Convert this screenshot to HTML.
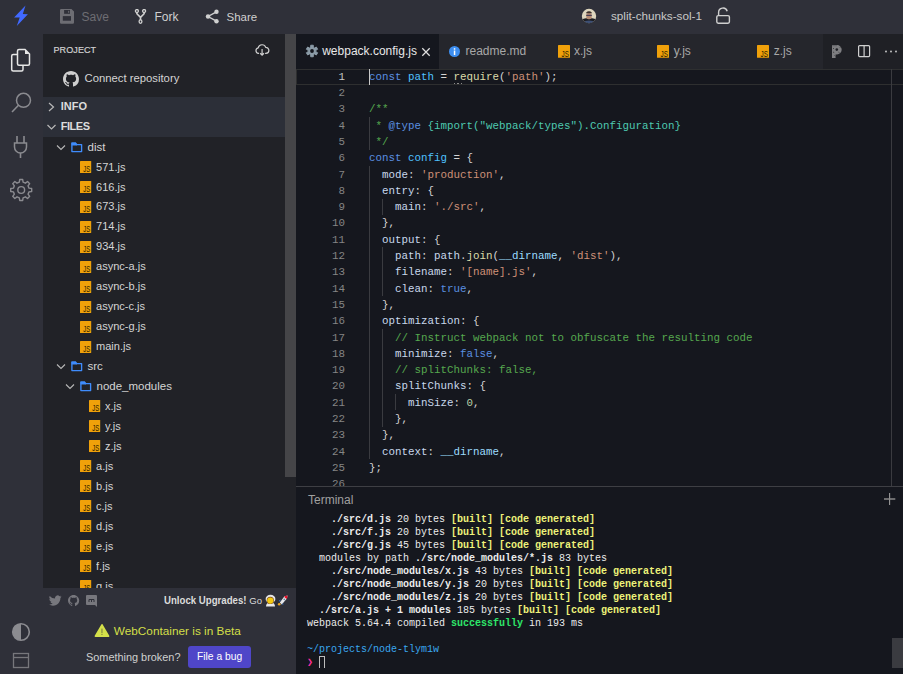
<!DOCTYPE html>
<html><head><meta charset="utf-8"><style>
html,body{margin:0;padding:0;width:903px;height:674px;overflow:hidden;background:#15171e;}
body{position:relative;font-family:'Liberation Sans', sans-serif;}
</style></head><body>
<div style="position:absolute;left:0px;top:0px;width:903px;height:34px;background:#2f3039;"></div><svg style="position:absolute;left:10px;top:2px;" width="24" height="28" viewBox="0 0 24 28"><polygon points="15.5,3.6 4.1,15.6 9.7,15.6 6.8,24 17.9,12.2 12.8,12.0" fill="#4169ff"/></svg><svg style="position:absolute;left:60px;top:9px;" width="14" height="15" viewBox="0 0 14 15"><path d="M1.5 0 H11.5 L14 2.5 V13.5 a1.2 1.2 0 0 1 -1.2 1.2 H1.2 a1.2 1.2 0 0 1 -1.2 -1.2 V1.2 a1.2 1.2 0 0 1 1.2 -1.2z" fill="#6d6d73"/><rect x="4.1" y="1" width="5.9" height="3.8" fill="#2f3039"/><rect x="8.2" y="1.8" width="1" height="2" fill="#6d6d73"/><rect x="2.8" y="7.1" width="8.2" height="4.6" fill="#2f3039"/></svg><div style="position:absolute;left:81.5px;top:16.74px;line-height:0;white-space:pre;font-family:'Liberation Sans', sans-serif;font-size:12px;font-weight:400;color:#6d6d73;letter-spacing:0px;">Save</div><svg style="position:absolute;left:134px;top:9px;" width="13" height="15" viewBox="0 0 13 15"><circle cx="2.9" cy="2" r="1.5" fill="none" stroke="#d0d0d0" stroke-width="1.3"/><circle cx="10.1" cy="2" r="1.5" fill="none" stroke="#d0d0d0" stroke-width="1.3"/><ellipse cx="6.5" cy="12.6" rx="1.4" ry="1.7" fill="none" stroke="#d0d0d0" stroke-width="1.3"/><path d="M2.9 3.5 V4.8 L6.5 8.4 L10.1 4.8 V3.5 M6.5 8.4 V10.9" fill="none" stroke="#d0d0d0" stroke-width="1.6" stroke-linejoin="round"/></svg><div style="position:absolute;left:154.4px;top:16.74px;line-height:0;white-space:pre;font-family:'Liberation Sans', sans-serif;font-size:12px;font-weight:400;color:#cfcfcf;letter-spacing:0px;">Fork</div><svg style="position:absolute;left:205px;top:9px;" width="15" height="15" viewBox="0 0 15 15"><circle cx="11.5" cy="2.8" r="2.2" fill="#cfcfcf"/><circle cx="3" cy="7.5" r="2.2" fill="#cfcfcf"/><circle cx="11.5" cy="12.2" r="2.2" fill="#cfcfcf"/><path d="M11.5 2.8 L3 7.5 L11.5 12.2" fill="none" stroke="#cfcfcf" stroke-width="1.4"/></svg><div style="position:absolute;left:226.5px;top:16.92px;line-height:0;white-space:pre;font-family:'Liberation Sans', sans-serif;font-size:11.5px;font-weight:400;color:#cfcfcf;letter-spacing:0px;">Share</div><svg style="position:absolute;left:581px;top:8px;" width="16" height="16" viewBox="0 0 16 16"><defs><clipPath id="av"><circle cx="8" cy="8" r="7.2"/></clipPath></defs><g clip-path="url(#av)"><rect width="16" height="16" fill="#ddd5bd"/><path d="M1 16 V12 Q2 10.5 5 10.3 H11 Q14 10.5 15 12 V16z" fill="#1c1d22"/><path d="M4 16 V13 Q8 11.8 12 13 V16z" fill="#3d4f75"/><rect x="5.3" y="5" width="5.4" height="6.2" rx="2" fill="#b48a72"/><path d="M5 6 Q5 3.2 8 3.3 Q11 3.2 11 6 V5.2 H5z" fill="#3a2f2a"/><rect x="5.2" y="6.8" width="5.6" height="1.1" fill="#3a3550"/></g></svg><div style="position:absolute;left:611px;top:15.75px;line-height:0;white-space:pre;font-family:'Liberation Sans', sans-serif;font-size:11.7px;font-weight:400;color:#c8c8c8;letter-spacing:0px;">split-chunks-sol-1</div><svg style="position:absolute;left:715px;top:7px;" width="16" height="18" viewBox="0 0 16 18"><rect x="1.8" y="8.6" width="12.6" height="7.6" rx="1.4" fill="none" stroke="#cfcfcf" stroke-width="1.4"/><path d="M3.6 8.6 V5.6 a4.4 4.4 0 0 1 8.6 -1.4" fill="none" stroke="#cfcfcf" stroke-width="1.4"/></svg><div style="position:absolute;left:0px;top:34px;width:43px;height:640px;background:#2f3039;"></div><svg style="position:absolute;left:10px;top:48px;" width="22" height="25" viewBox="0 0 22 25"><path d="M7.5 6.5 H3.2 a1.5 1.5 0 0 0 -1.5 1.5 V21.5 a1.5 1.5 0 0 0 1.5 1.5 H11.5 a1.5 1.5 0 0 0 1.5 -1.5 V18" fill="none" stroke="#e6e6e6" stroke-width="1.5"/><path d="M9 1.5 H15 L19.5 6 V15.8 a1.5 1.5 0 0 1 -1.5 1.5 H9 a1.5 1.5 0 0 1 -1.5 -1.5 V3 a1.5 1.5 0 0 1 1.5 -1.5z" fill="none" stroke="#e6e6e6" stroke-width="1.5"/><path d="M15 1.5 V6 H19.5z" fill="#e6e6e6"/></svg><svg style="position:absolute;left:10px;top:91px;" width="23" height="24" viewBox="0 0 23 24"><circle cx="13.5" cy="9.3" r="7" fill="none" stroke="#8b8b90" stroke-width="1.5"/><path d="M8.5 14.3 L2 21" stroke="#8b8b90" stroke-width="1.6"/></svg><svg style="position:absolute;left:12px;top:134px;" width="18" height="26" viewBox="0 0 18 26"><path d="M5 2 V9 M12 2 V9" stroke="#8b8b90" stroke-width="1.6"/><path d="M2.5 9 H14.5 V13 a6 6 0 0 1 -12 0z" fill="none" stroke="#8b8b90" stroke-width="1.5"/><path d="M8.5 19 V24" stroke="#8b8b90" stroke-width="1.6"/></svg><svg style="position:absolute;left:9px;top:178px;" width="25" height="25" viewBox="0 0 25 25"><path d="M10.33 4.22 L10.71 1.51 L13.69 1.51 L14.07 4.22 L16.38 5.18 L18.56 3.52 L20.68 5.64 L19.02 7.82 L19.98 10.13 L22.69 10.51 L22.69 13.49 L19.98 13.87 L19.02 16.18 L20.68 18.36 L18.56 20.48 L16.38 18.82 L14.07 19.78 L13.69 22.49 L10.71 22.49 L10.33 19.78 L8.02 18.82 L5.84 20.48 L3.72 18.36 L5.38 16.18 L4.42 13.87 L1.71 13.49 L1.71 10.51 L4.42 10.13 L5.38 7.82 L3.72 5.64 L5.84 3.52 L8.02 5.18Z" fill="none" stroke="#8b8b90" stroke-width="1.4" stroke-linejoin="round"/><circle cx="12.2" cy="12" r="3.4" fill="none" stroke="#8b8b90" stroke-width="1.4"/></svg><svg style="position:absolute;left:11px;top:622px;" width="20" height="20" viewBox="0 0 20 20"><circle cx="10" cy="10" r="8.3" fill="none" stroke="#8b8b90" stroke-width="1.6"/><path d="M10 1.7 a8.3 8.3 0 0 0 0 16.6z" fill="#8b8b90"/></svg><svg style="position:absolute;left:12px;top:652px;" width="18" height="17" viewBox="0 0 18 17"><rect x="1.5" y="1.5" width="15" height="14" fill="none" stroke="#77777c" stroke-width="1.3"/><path d="M1.5 5.5 H16.5" stroke="#77777c" stroke-width="1.3"/></svg><div style="position:absolute;left:43px;top:34px;width:242px;height:554px;background:#212227;"></div><div style="position:absolute;left:53.5px;top:50.08px;line-height:0;white-space:pre;font-family:'Liberation Sans', sans-serif;font-size:9px;font-weight:400;color:#d0d0d0;letter-spacing:0.1px;-webkit-text-stroke:0.2px #d0d0d0;">PROJECT</div><svg style="position:absolute;left:254px;top:42px;" width="16" height="15" viewBox="0 0 16 15"><g transform="translate(1.2,1.5) scale(0.86)"><path d="M4.5 11.5 H3.8 a3.3 3.3 0 0 1 -.3 -6.5 a4.6 4.6 0 0 1 8.8 -.5 a3.5 3.5 0 0 1 .2 7 H11.5" fill="none" stroke="#d0d0d0" stroke-width="1.4"/><path d="M8 6.5 V13.5 M5.8 11.3 L8 13.6 L10.2 11.3" fill="none" stroke="#d0d0d0" stroke-width="1.4"/></g></svg><svg style="position:absolute;left:63px;top:71px;" width="16" height="16" viewBox="0 0 16 16"><path fill="#cfcfcf" d="M8 0C3.58 0 0 3.58 0 8c0 3.54 2.29 6.53 5.47 7.59.4.07.55-.17.55-.38 0-.19-.01-.82-.01-1.49-2.01.37-2.53-.49-2.69-.94-.09-.23-.48-.94-.82-1.13-.28-.15-.68-.52-.01-.53.63-.01 1.08.58 1.23.82.72 1.21 1.87.87 2.33.66.07-.52.28-.87.51-1.07-1.78-.2-3.64-.89-3.64-3.95 0-.87.31-1.59.82-2.15-.08-.2-.36-1.02.08-2.12 0 0 .67-.21 2.2.82.64-.18 1.32-.27 2-.27.68 0 1.36.09 2 .27 1.53-1.04 2.2-.82 2.2-.82.44 1.1.16 1.92.08 2.12.51.56.82 1.27.82 2.15 0 3.07-1.87 3.75-3.65 3.95.29.25.54.73.54 1.48 0 1.07-.01 1.93-.01 2.2 0 .21.15.46.55.38A8.013 8.013 0 0016 8c0-4.42-3.58-8-8-8z"/></svg><div style="position:absolute;left:84.5px;top:78.48px;line-height:0;white-space:pre;font-family:'Liberation Sans', sans-serif;font-size:11.3px;font-weight:400;color:#d4d4d4;letter-spacing:0px;">Connect repository</div><div style="position:absolute;left:43px;top:97px;width:242px;height:40px;background:#2c2f38;"></div><svg style="position:absolute;left:46px;top:101px;" width="10" height="12" viewBox="0 0 10 12"><path d="M3 2 L7.5 6 L3 10" fill="none" stroke="#b8b8b8" stroke-width="1.2"/></svg><div style="position:absolute;left:60.8px;top:106.19px;line-height:0;white-space:pre;font-family:'Liberation Sans', sans-serif;font-size:11px;font-weight:700;color:#dcdcdc;letter-spacing:0px;">INFO</div><svg style="position:absolute;left:46px;top:121px;" width="10" height="12" viewBox="0 0 10 12"><path d="M1.5 4 L5.5 8 L9.5 4" fill="none" stroke="#b8b8b8" stroke-width="1.2"/></svg><div style="position:absolute;left:60.8px;top:125.79px;line-height:0;white-space:pre;font-family:'Liberation Sans', sans-serif;font-size:11px;font-weight:700;color:#dcdcdc;letter-spacing:-0.5px;">FILES</div><div style="position:absolute;left:43px;top:137px;width:242px;height:451px;overflow:hidden"><svg style="position:absolute;left:13px;top:6.5px;" width="10" height="8" viewBox="0 0 10 8"><path d="M1 1.5 L5 5.5 L9 1.5" fill="none" stroke="#b8b8b8" stroke-width="1.1"/></svg><svg style="position:absolute;left:27.6px;top:5.0px;" width="13" height="11" viewBox="0 0 13 11"><path d="M0.9 1.2 H4.6 L5.6 2.6 H10.6 V9.6 H0.9z" fill="none" stroke="#3f8cfc" stroke-width="1.35" stroke-linejoin="round"/><path d="M0.5 0.6 H4.8 L5.9 2.2 V3.6 H0.5z" fill="#3f8cfc"/></svg><div style="position:absolute;left:44.5px;top:10.02px;line-height:0;white-space:pre;font-family:'Liberation Sans', sans-serif;font-size:11.5px;font-weight:400;color:#d4d4d4;letter-spacing:0px;">dist</div><svg style="position:absolute;left:37px;top:24px;" width="13" height="13" viewBox="0 0 13 13"><rect x="0" y="0" width="11.2" height="12" rx="0.6" fill="#f0a10a"/><g transform="translate(10.1,11.1) scale(0.72,1)"><text x="0" y="0" text-anchor="end" font-family="Liberation Sans" font-size="8.2" fill="#2a1c00">JS</text></g></svg><div style="position:absolute;left:53.400000000000006px;top:29.57px;line-height:0;white-space:pre;font-family:'Liberation Sans', sans-serif;font-size:11.5px;font-weight:400;color:#d4d4d4;letter-spacing:0px;transform:scaleX(0.96);transform-origin:0 0;">571.js</div><svg style="position:absolute;left:37px;top:44px;" width="13" height="13" viewBox="0 0 13 13"><rect x="0" y="0" width="11.2" height="12" rx="0.6" fill="#f0a10a"/><g transform="translate(10.1,11.1) scale(0.72,1)"><text x="0" y="0" text-anchor="end" font-family="Liberation Sans" font-size="8.2" fill="#2a1c00">JS</text></g></svg><div style="position:absolute;left:53.400000000000006px;top:49.52px;line-height:0;white-space:pre;font-family:'Liberation Sans', sans-serif;font-size:11.5px;font-weight:400;color:#d4d4d4;letter-spacing:0px;transform:scaleX(0.96);transform-origin:0 0;">616.js</div><svg style="position:absolute;left:37px;top:64px;" width="13" height="13" viewBox="0 0 13 13"><rect x="0" y="0" width="11.2" height="12" rx="0.6" fill="#f0a10a"/><g transform="translate(10.1,11.1) scale(0.72,1)"><text x="0" y="0" text-anchor="end" font-family="Liberation Sans" font-size="8.2" fill="#2a1c00">JS</text></g></svg><div style="position:absolute;left:53.400000000000006px;top:69.47px;line-height:0;white-space:pre;font-family:'Liberation Sans', sans-serif;font-size:11.5px;font-weight:400;color:#d4d4d4;letter-spacing:0px;transform:scaleX(0.96);transform-origin:0 0;">673.js</div><svg style="position:absolute;left:37px;top:84px;" width="13" height="13" viewBox="0 0 13 13"><rect x="0" y="0" width="11.2" height="12" rx="0.6" fill="#f0a10a"/><g transform="translate(10.1,11.1) scale(0.72,1)"><text x="0" y="0" text-anchor="end" font-family="Liberation Sans" font-size="8.2" fill="#2a1c00">JS</text></g></svg><div style="position:absolute;left:53.400000000000006px;top:89.42px;line-height:0;white-space:pre;font-family:'Liberation Sans', sans-serif;font-size:11.5px;font-weight:400;color:#d4d4d4;letter-spacing:0px;transform:scaleX(0.96);transform-origin:0 0;">714.js</div><svg style="position:absolute;left:37px;top:104px;" width="13" height="13" viewBox="0 0 13 13"><rect x="0" y="0" width="11.2" height="12" rx="0.6" fill="#f0a10a"/><g transform="translate(10.1,11.1) scale(0.72,1)"><text x="0" y="0" text-anchor="end" font-family="Liberation Sans" font-size="8.2" fill="#2a1c00">JS</text></g></svg><div style="position:absolute;left:53.400000000000006px;top:109.37px;line-height:0;white-space:pre;font-family:'Liberation Sans', sans-serif;font-size:11.5px;font-weight:400;color:#d4d4d4;letter-spacing:0px;transform:scaleX(0.96);transform-origin:0 0;">934.js</div><svg style="position:absolute;left:37px;top:124px;" width="13" height="13" viewBox="0 0 13 13"><rect x="0" y="0" width="11.2" height="12" rx="0.6" fill="#f0a10a"/><g transform="translate(10.1,11.1) scale(0.72,1)"><text x="0" y="0" text-anchor="end" font-family="Liberation Sans" font-size="8.2" fill="#2a1c00">JS</text></g></svg><div style="position:absolute;left:53.400000000000006px;top:129.32px;line-height:0;white-space:pre;font-family:'Liberation Sans', sans-serif;font-size:11.5px;font-weight:400;color:#d4d4d4;letter-spacing:0px;transform:scaleX(0.96);transform-origin:0 0;">async-a.js</div><svg style="position:absolute;left:37px;top:144px;" width="13" height="13" viewBox="0 0 13 13"><rect x="0" y="0" width="11.2" height="12" rx="0.6" fill="#f0a10a"/><g transform="translate(10.1,11.1) scale(0.72,1)"><text x="0" y="0" text-anchor="end" font-family="Liberation Sans" font-size="8.2" fill="#2a1c00">JS</text></g></svg><div style="position:absolute;left:53.400000000000006px;top:149.27px;line-height:0;white-space:pre;font-family:'Liberation Sans', sans-serif;font-size:11.5px;font-weight:400;color:#d4d4d4;letter-spacing:0px;transform:scaleX(0.96);transform-origin:0 0;">async-b.js</div><svg style="position:absolute;left:37px;top:164px;" width="13" height="13" viewBox="0 0 13 13"><rect x="0" y="0" width="11.2" height="12" rx="0.6" fill="#f0a10a"/><g transform="translate(10.1,11.1) scale(0.72,1)"><text x="0" y="0" text-anchor="end" font-family="Liberation Sans" font-size="8.2" fill="#2a1c00">JS</text></g></svg><div style="position:absolute;left:53.400000000000006px;top:169.22px;line-height:0;white-space:pre;font-family:'Liberation Sans', sans-serif;font-size:11.5px;font-weight:400;color:#d4d4d4;letter-spacing:0px;transform:scaleX(0.96);transform-origin:0 0;">async-c.js</div><svg style="position:absolute;left:37px;top:184px;" width="13" height="13" viewBox="0 0 13 13"><rect x="0" y="0" width="11.2" height="12" rx="0.6" fill="#f0a10a"/><g transform="translate(10.1,11.1) scale(0.72,1)"><text x="0" y="0" text-anchor="end" font-family="Liberation Sans" font-size="8.2" fill="#2a1c00">JS</text></g></svg><div style="position:absolute;left:53.400000000000006px;top:189.17px;line-height:0;white-space:pre;font-family:'Liberation Sans', sans-serif;font-size:11.5px;font-weight:400;color:#d4d4d4;letter-spacing:0px;transform:scaleX(0.96);transform-origin:0 0;">async-g.js</div><svg style="position:absolute;left:37px;top:204px;" width="13" height="13" viewBox="0 0 13 13"><rect x="0" y="0" width="11.2" height="12" rx="0.6" fill="#f0a10a"/><g transform="translate(10.1,11.1) scale(0.72,1)"><text x="0" y="0" text-anchor="end" font-family="Liberation Sans" font-size="8.2" fill="#2a1c00">JS</text></g></svg><div style="position:absolute;left:53.400000000000006px;top:209.12px;line-height:0;white-space:pre;font-family:'Liberation Sans', sans-serif;font-size:11.5px;font-weight:400;color:#d4d4d4;letter-spacing:0px;transform:scaleX(0.96);transform-origin:0 0;">main.js</div><svg style="position:absolute;left:13px;top:225.95px;" width="10" height="8" viewBox="0 0 10 8"><path d="M1 1.5 L5 5.5 L9 1.5" fill="none" stroke="#b8b8b8" stroke-width="1.1"/></svg><svg style="position:absolute;left:27.6px;top:224.45px;" width="13" height="11" viewBox="0 0 13 11"><path d="M0.9 1.2 H4.6 L5.6 2.6 H10.6 V9.6 H0.9z" fill="none" stroke="#3f8cfc" stroke-width="1.35" stroke-linejoin="round"/><path d="M0.5 0.6 H4.8 L5.9 2.2 V3.6 H0.5z" fill="#3f8cfc"/></svg><div style="position:absolute;left:44.5px;top:229.47px;line-height:0;white-space:pre;font-family:'Liberation Sans', sans-serif;font-size:11.5px;font-weight:400;color:#d4d4d4;letter-spacing:0px;">src</div><svg style="position:absolute;left:22px;top:245.89999999999998px;" width="10" height="8" viewBox="0 0 10 8"><path d="M1 1.5 L5 5.5 L9 1.5" fill="none" stroke="#b8b8b8" stroke-width="1.1"/></svg><svg style="position:absolute;left:36.6px;top:244.39999999999998px;" width="13" height="11" viewBox="0 0 13 11"><path d="M0.9 1.2 H4.6 L5.6 2.6 H10.6 V9.6 H0.9z" fill="none" stroke="#3f8cfc" stroke-width="1.35" stroke-linejoin="round"/><path d="M0.5 0.6 H4.8 L5.9 2.2 V3.6 H0.5z" fill="#3f8cfc"/></svg><div style="position:absolute;left:53.5px;top:249.42px;line-height:0;white-space:pre;font-family:'Liberation Sans', sans-serif;font-size:11.5px;font-weight:400;color:#d4d4d4;letter-spacing:0px;">node_modules</div><svg style="position:absolute;left:46px;top:263px;" width="13" height="13" viewBox="0 0 13 13"><rect x="0" y="0" width="11.2" height="12" rx="0.6" fill="#f0a10a"/><g transform="translate(10.1,11.1) scale(0.72,1)"><text x="0" y="0" text-anchor="end" font-family="Liberation Sans" font-size="8.2" fill="#2a1c00">JS</text></g></svg><div style="position:absolute;left:62.400000000000006px;top:268.97px;line-height:0;white-space:pre;font-family:'Liberation Sans', sans-serif;font-size:11.5px;font-weight:400;color:#d4d4d4;letter-spacing:0px;transform:scaleX(0.96);transform-origin:0 0;">x.js</div><svg style="position:absolute;left:46px;top:283px;" width="13" height="13" viewBox="0 0 13 13"><rect x="0" y="0" width="11.2" height="12" rx="0.6" fill="#f0a10a"/><g transform="translate(10.1,11.1) scale(0.72,1)"><text x="0" y="0" text-anchor="end" font-family="Liberation Sans" font-size="8.2" fill="#2a1c00">JS</text></g></svg><div style="position:absolute;left:62.400000000000006px;top:288.92px;line-height:0;white-space:pre;font-family:'Liberation Sans', sans-serif;font-size:11.5px;font-weight:400;color:#d4d4d4;letter-spacing:0px;transform:scaleX(0.96);transform-origin:0 0;">y.js</div><svg style="position:absolute;left:46px;top:303px;" width="13" height="13" viewBox="0 0 13 13"><rect x="0" y="0" width="11.2" height="12" rx="0.6" fill="#f0a10a"/><g transform="translate(10.1,11.1) scale(0.72,1)"><text x="0" y="0" text-anchor="end" font-family="Liberation Sans" font-size="8.2" fill="#2a1c00">JS</text></g></svg><div style="position:absolute;left:62.400000000000006px;top:308.87px;line-height:0;white-space:pre;font-family:'Liberation Sans', sans-serif;font-size:11.5px;font-weight:400;color:#d4d4d4;letter-spacing:0px;transform:scaleX(0.96);transform-origin:0 0;">z.js</div><svg style="position:absolute;left:37px;top:323px;" width="13" height="13" viewBox="0 0 13 13"><rect x="0" y="0" width="11.2" height="12" rx="0.6" fill="#f0a10a"/><g transform="translate(10.1,11.1) scale(0.72,1)"><text x="0" y="0" text-anchor="end" font-family="Liberation Sans" font-size="8.2" fill="#2a1c00">JS</text></g></svg><div style="position:absolute;left:53.400000000000006px;top:328.82px;line-height:0;white-space:pre;font-family:'Liberation Sans', sans-serif;font-size:11.5px;font-weight:400;color:#d4d4d4;letter-spacing:0px;transform:scaleX(0.96);transform-origin:0 0;">a.js</div><svg style="position:absolute;left:37px;top:343px;" width="13" height="13" viewBox="0 0 13 13"><rect x="0" y="0" width="11.2" height="12" rx="0.6" fill="#f0a10a"/><g transform="translate(10.1,11.1) scale(0.72,1)"><text x="0" y="0" text-anchor="end" font-family="Liberation Sans" font-size="8.2" fill="#2a1c00">JS</text></g></svg><div style="position:absolute;left:53.400000000000006px;top:348.77px;line-height:0;white-space:pre;font-family:'Liberation Sans', sans-serif;font-size:11.5px;font-weight:400;color:#d4d4d4;letter-spacing:0px;transform:scaleX(0.96);transform-origin:0 0;">b.js</div><svg style="position:absolute;left:37px;top:363px;" width="13" height="13" viewBox="0 0 13 13"><rect x="0" y="0" width="11.2" height="12" rx="0.6" fill="#f0a10a"/><g transform="translate(10.1,11.1) scale(0.72,1)"><text x="0" y="0" text-anchor="end" font-family="Liberation Sans" font-size="8.2" fill="#2a1c00">JS</text></g></svg><div style="position:absolute;left:53.400000000000006px;top:368.72px;line-height:0;white-space:pre;font-family:'Liberation Sans', sans-serif;font-size:11.5px;font-weight:400;color:#d4d4d4;letter-spacing:0px;transform:scaleX(0.96);transform-origin:0 0;">c.js</div><svg style="position:absolute;left:37px;top:383px;" width="13" height="13" viewBox="0 0 13 13"><rect x="0" y="0" width="11.2" height="12" rx="0.6" fill="#f0a10a"/><g transform="translate(10.1,11.1) scale(0.72,1)"><text x="0" y="0" text-anchor="end" font-family="Liberation Sans" font-size="8.2" fill="#2a1c00">JS</text></g></svg><div style="position:absolute;left:53.400000000000006px;top:388.67px;line-height:0;white-space:pre;font-family:'Liberation Sans', sans-serif;font-size:11.5px;font-weight:400;color:#d4d4d4;letter-spacing:0px;transform:scaleX(0.96);transform-origin:0 0;">d.js</div><svg style="position:absolute;left:37px;top:403px;" width="13" height="13" viewBox="0 0 13 13"><rect x="0" y="0" width="11.2" height="12" rx="0.6" fill="#f0a10a"/><g transform="translate(10.1,11.1) scale(0.72,1)"><text x="0" y="0" text-anchor="end" font-family="Liberation Sans" font-size="8.2" fill="#2a1c00">JS</text></g></svg><div style="position:absolute;left:53.400000000000006px;top:408.62px;line-height:0;white-space:pre;font-family:'Liberation Sans', sans-serif;font-size:11.5px;font-weight:400;color:#d4d4d4;letter-spacing:0px;transform:scaleX(0.96);transform-origin:0 0;">e.js</div><svg style="position:absolute;left:37px;top:423px;" width="13" height="13" viewBox="0 0 13 13"><rect x="0" y="0" width="11.2" height="12" rx="0.6" fill="#f0a10a"/><g transform="translate(10.1,11.1) scale(0.72,1)"><text x="0" y="0" text-anchor="end" font-family="Liberation Sans" font-size="8.2" fill="#2a1c00">JS</text></g></svg><div style="position:absolute;left:53.400000000000006px;top:428.57px;line-height:0;white-space:pre;font-family:'Liberation Sans', sans-serif;font-size:11.5px;font-weight:400;color:#d4d4d4;letter-spacing:0px;transform:scaleX(0.96);transform-origin:0 0;">f.js</div><svg style="position:absolute;left:37px;top:443px;" width="13" height="13" viewBox="0 0 13 13"><rect x="0" y="0" width="11.2" height="12" rx="0.6" fill="#f0a10a"/><g transform="translate(10.1,11.1) scale(0.72,1)"><text x="0" y="0" text-anchor="end" font-family="Liberation Sans" font-size="8.2" fill="#2a1c00">JS</text></g></svg><div style="position:absolute;left:53.400000000000006px;top:448.52px;line-height:0;white-space:pre;font-family:'Liberation Sans', sans-serif;font-size:11.5px;font-weight:400;color:#d4d4d4;letter-spacing:0px;transform:scaleX(0.96);transform-origin:0 0;">g.js</div></div><div style="position:absolute;left:285px;top:34px;width:11px;height:443px;background:#454548;"></div><div style="position:absolute;left:285px;top:477px;width:11px;height:111px;background:#212227;"></div><div style="position:absolute;left:43px;top:588px;width:253px;height:86px;background:#2f3039;"></div><svg style="position:absolute;left:49px;top:595px;" width="13" height="11" viewBox="0 0 13 11"><path fill="#77777d" d="M12.5 1.6c-.5.2-1 .35-1.5.4.55-.33.95-.84 1.15-1.45-.5.3-1.06.52-1.65.63A2.6 2.6 0 0 0 6.1 3.6 7.4 7.4 0 0 1 .75.9a2.6 2.6 0 0 0 .8 3.47c-.43 0-.83-.13-1.18-.32v.03c0 1.26.9 2.3 2.08 2.55-.38.1-.8.12-1.17.04a2.6 2.6 0 0 0 2.43 1.8A5.2 5.2 0 0 1 0 9.55 7.4 7.4 0 0 0 4 10.7c4.8 0 7.4-3.96 7.4-7.4v-.34c.5-.36.94-.82 1.1-1.36z"/></svg><svg style="position:absolute;left:67.5px;top:595px;" width="12" height="12" viewBox="0 0 12 12"><path fill="#77777d" transform="scale(0.7)" d="M8 0C3.58 0 0 3.58 0 8c0 3.54 2.29 6.53 5.47 7.59.4.07.55-.17.55-.38 0-.19-.01-.82-.01-1.49-2.01.37-2.53-.49-2.69-.94-.09-.23-.48-.94-.82-1.13-.28-.15-.68-.52-.01-.53.63-.01 1.08.58 1.23.82.72 1.21 1.870.87 2.33.66.07-.52.28-.87.51-1.07-1.78-.2-3.64-.89-3.64-3.95 0-.87.31-1.59.82-2.15-.08-.2-.36-1.02.08-2.12 0 0 .67-.21 2.2.82.64-.18 1.32-.27 2-.27.68 0 1.36.09 2 .27 1.53-1.04 2.2-.82 2.2-.82.44 1.1.16 1.92.08 2.12.51.56.82 1.27.82 2.15 0 3.070-1.87 3.75-3.65 3.95.29.25.54.73.54 1.48 0 1.07-.01 1.93-.01 2.2 0 .21.15.46.55.38A8.013 8.013 0 0016 8c0-4.42-3.58-8-8-8z"/></svg><svg style="position:absolute;left:86px;top:595px;" width="11" height="12" viewBox="0 0 11 12"><path fill="#77777d" d="M1 0 H10 a1 1 0 0 1 1 1 V12 L9 10 H1 a1 1 0 0 1 -1 -1 V1 a1 1 0 0 1 1 -1z"/><path d="M3 7 V4.5 H8 V7 M5.5 4.5 V7" fill="none" stroke="#2f3039" stroke-width="1"/></svg><div style="position:absolute;left:164px;top:599.99px;line-height:0;white-space:pre;font-family:'Liberation Sans', sans-serif;font-size:11px;font-weight:700;color:#dcdcdc;letter-spacing:0px;transform:scaleX(0.877);transform-origin:0 0;">Unlock Upgrades!</div><div style="position:absolute;left:249.3px;top:600.51px;line-height:0;white-space:pre;font-family:'Liberation Sans', sans-serif;font-size:9.5px;font-weight:400;color:#dcdcdc;letter-spacing:0px;">Go</div><svg style="position:absolute;left:264px;top:594px;" width="13" height="14" viewBox="0 0 13 14"><path d="M2 12.5 Q2 8.5 6.5 8.3 Q11 8.5 11 12.5z" fill="#e8e8e8"/><ellipse cx="6.5" cy="5" rx="4.9" ry="4.2" fill="#e6e6e6"/><circle cx="6.3" cy="6.4" r="3.6" fill="#7a4a20"/><circle cx="6.3" cy="6.6" r="3.1" fill="#f2c811"/></svg><svg style="position:absolute;left:277px;top:594px;" width="12" height="13" viewBox="0 0 12 13"><path d="M10.6 1.4 L7.5 2.3 L2.8 8.6 L4.8 10.4 L9.9 4.6z" fill="#e8e8ea"/><path d="M10.6 1.4 L7.6 2.2 L9.9 4.6z" fill="#e8102a"/><path d="M7.8 2.4 L10 4.4" stroke="#e8102a" stroke-width="1.6"/><circle cx="7.3" cy="5.3" r="0.9" fill="#6a8aa0"/><path d="M3.8 5.6 L1.9 6.4 L2.9 7.8z" fill="#2a73d8"/><path d="M5.6 9.4 L5.4 11 L6.9 10.1z" fill="#2a73d8"/><circle cx="2.2" cy="10.2" r="1.3" fill="#f0a820"/></svg><svg style="position:absolute;left:94px;top:623px;" width="16" height="15" viewBox="0 0 16 15"><path d="M8 1.8 L14.6 13.2 H1.4z" fill="#d4e04a" stroke="#d4e04a" stroke-width="1.6" stroke-linejoin="round"/><rect x="7.3" y="5.6" width="1.3" height="4.4" fill="#8a9040"/><rect x="7.3" y="10.8" width="1.3" height="1.2" fill="#8a9040"/></svg><div style="position:absolute;left:113.8px;top:630.91px;line-height:0;white-space:pre;font-family:'Liberation Sans', sans-serif;font-size:11.8px;font-weight:400;color:#d2df48;letter-spacing:0px;">WebContainer is in Beta</div><div style="position:absolute;left:86px;top:656.92px;line-height:0;white-space:pre;font-family:'Liberation Sans', sans-serif;font-size:10.9px;font-weight:400;color:#d0d0d0;letter-spacing:0px;">Something broken?</div><div style="position:absolute;left:188px;top:646px;width:63px;height:22px;background:#4f46c8;border-radius:3px;"></div><div style="position:absolute;left:197px;top:657.43px;line-height:0;white-space:pre;font-family:'Liberation Sans', sans-serif;font-size:10.3px;font-weight:400;color:#ffffff;letter-spacing:0px;">File a bug</div><div style="position:absolute;left:296px;top:34px;width:607px;height:35px;background:#25262c;"></div><div style="position:absolute;left:823px;top:34px;width:80px;height:35px;background:#1f2025;"></div><div style="position:absolute;left:296px;top:34px;width:143px;height:35px;background:#15171e;"></div><svg style="position:absolute;left:305px;top:44.4px;" width="14" height="14" viewBox="0 0 14 14"><path d="M5.68 3.33 L5.71 1.24 L8.29 1.24 L8.32 3.33 L9.52 4.02 L11.34 3.01 L12.63 5.24 L10.84 6.31 L10.84 7.69 L12.63 8.76 L11.34 10.99 L9.52 9.98 L8.32 10.67 L8.29 12.76 L5.71 12.76 L5.68 10.67 L4.48 9.98 L2.66 10.99 L1.37 8.76 L3.16 7.69 L3.16 6.31 L1.37 5.24 L2.66 3.01 L4.48 4.02Z" fill="#8b9ba7" stroke="#8b9ba7" stroke-width="1" stroke-linejoin="round"/><circle cx="7" cy="7" r="1.9" fill="#15171e"/></svg><div style="position:absolute;left:322.2px;top:51.14px;line-height:0;white-space:pre;font-family:'Liberation Sans', sans-serif;font-size:12px;font-weight:400;color:#e8e8e8;letter-spacing:0px;">webpack.config.js</div><svg style="position:absolute;left:421px;top:46.8px;" width="10" height="10" viewBox="0 0 10 10"><path d="M1.3 1.3 L8.7 8.7 M8.7 1.3 L1.3 8.7" stroke="#e0e0e0" stroke-width="1.25"/></svg><svg style="position:absolute;left:449px;top:46px;" width="11" height="11" viewBox="0 0 11 11"><circle cx="5.5" cy="5.5" r="5.5" fill="#3d8ef0"/><rect x="4.8" y="4.5" width="1.5" height="4.5" fill="#fff"/><rect x="4.8" y="2.2" width="1.5" height="1.5" fill="#fff"/></svg><div style="position:absolute;left:465.5px;top:51.14px;line-height:0;white-space:pre;font-family:'Liberation Sans', sans-serif;font-size:12px;font-weight:400;color:#a8a8a8;letter-spacing:0px;">readme.md</div><svg style="position:absolute;left:558px;top:45px;" width="13" height="13" viewBox="0 0 13 13"><rect x="0" y="0" width="12" height="12.8" rx="0.6" fill="#f0a10a"/><g transform="translate(10.9,11.9) scale(0.72,1)"><text x="0" y="0" text-anchor="end" font-family="Liberation Sans" font-size="8.8" fill="#2a1c00">JS</text></g></svg><div style="position:absolute;left:574px;top:51.14px;line-height:0;white-space:pre;font-family:'Liberation Sans', sans-serif;font-size:12px;font-weight:400;color:#a8a8a8;letter-spacing:0px;">x.js</div><svg style="position:absolute;left:657px;top:45px;" width="13" height="13" viewBox="0 0 13 13"><rect x="0" y="0" width="12" height="12.8" rx="0.6" fill="#f0a10a"/><g transform="translate(10.9,11.9) scale(0.72,1)"><text x="0" y="0" text-anchor="end" font-family="Liberation Sans" font-size="8.8" fill="#2a1c00">JS</text></g></svg><div style="position:absolute;left:673.7px;top:51.14px;line-height:0;white-space:pre;font-family:'Liberation Sans', sans-serif;font-size:12px;font-weight:400;color:#a8a8a8;letter-spacing:0px;">y.js</div><svg style="position:absolute;left:757px;top:45px;" width="13" height="13" viewBox="0 0 13 13"><rect x="0" y="0" width="12" height="12.8" rx="0.6" fill="#f0a10a"/><g transform="translate(10.9,11.9) scale(0.72,1)"><text x="0" y="0" text-anchor="end" font-family="Liberation Sans" font-size="8.8" fill="#2a1c00">JS</text></g></svg><div style="position:absolute;left:773.7px;top:51.14px;line-height:0;white-space:pre;font-family:'Liberation Sans', sans-serif;font-size:12px;font-weight:400;color:#a8a8a8;letter-spacing:0px;">z.js</div><svg style="position:absolute;left:831px;top:44px;" width="12" height="15" viewBox="0 0 12 15"><path d="M1 1 H6 a4.7 4.7 0 0 1 0 9.4 H4.6 V14 H1z" fill="#7e7e81"/><rect x="1" y="1" width="5" height="1.2" fill="#66666a"/><circle cx="5.8" cy="5.6" r="1.3" fill="#202126"/><path d="M2 4 l1 1 M2 8 l1.2 .6 M3.5 11.5 l.8 .8 M7.5 8.2 l1 .6 M8.8 3.2 l.6 .6" stroke="#3a3a3c" stroke-width="0.9"/></svg><svg style="position:absolute;left:857px;top:44px;" width="14" height="14" viewBox="0 0 14 14"><rect x="1.6" y="1.6" width="11" height="11" rx="1" fill="none" stroke="#d0d0d0" stroke-width="1.2"/><path d="M7.1 1.6 V12.6" stroke="#d0d0d0" stroke-width="1.2"/></svg><svg style="position:absolute;left:884px;top:49px;" width="14" height="5" viewBox="0 0 14 5"><circle cx="2" cy="2.5" r="0.9" fill="#d0d0d0"/><circle cx="7" cy="2.5" r="0.9" fill="#d0d0d0"/><circle cx="12" cy="2.5" r="0.9" fill="#d0d0d0"/></svg><div style="position:absolute;left:296px;top:69px;width:607px;height:417px;background:#15171e;"></div><div style="position:absolute;left:296px;top:69px;width:607px;height:1px;background:#2e2f30;"></div><div style="position:absolute;left:296px;top:84px;width:607px;height:1px;background:#2e2f30;"></div><div style="position:absolute;left:296px;top:69px;width:1px;height:16px;background:#2e2f30;"></div><div style="position:absolute;left:891px;top:69px;width:1px;height:417px;background:#3a3b40;"></div><div style="position:absolute;left:296px;top:486px;width:607px;height:1px;background:#3e3f44;"></div><div style="position:absolute;left:296px;top:69px;width:595px;height:417px;overflow:hidden"><div style="position:absolute;left:73.0px;top:48.0px;width:1px;height:32.6px;background:#3a3b40"></div><div style="position:absolute;left:73.0px;top:96.9px;width:1px;height:293.4px;background:#3a3b40"></div><div style="position:absolute;left:86.0px;top:129.5px;width:1px;height:16.3px;background:#3a3b40"></div><div style="position:absolute;left:86.0px;top:178.4px;width:1px;height:48.9px;background:#3a3b40"></div><div style="position:absolute;left:86.0px;top:259.9px;width:1px;height:97.8px;background:#3a3b40"></div><div style="position:absolute;left:99.0px;top:325.1px;width:1px;height:16.3px;background:#3a3b40"></div><div style="position:absolute;right:546px;top:7.71px;line-height:0;white-space:pre;font-family:'Liberation Mono', monospace;font-size:10.83px;color:#c6c6c6;text-align:right;width:60px;left:-11px">1</div><div style="position:absolute;left:73px;top:7.71px;line-height:0;white-space:pre;font-family:'Liberation Mono', monospace;font-size:10.83px"><span style="color:#5a8fe0">const</span><span style="color:#d4d4d4"> </span><span style="color:#4fc1ff">path</span><span style="color:#d4d4d4"> = </span><span style="color:#dcdcaa">require</span><span style="color:#d4d4d4">(</span><span style="color:#ce9178">&#x27;path&#x27;</span><span style="color:#d4d4d4">);</span></div><div style="position:absolute;right:546px;top:24.01px;line-height:0;white-space:pre;font-family:'Liberation Mono', monospace;font-size:10.83px;color:#858585;text-align:right;width:60px;left:-11px">2</div><div style="position:absolute;left:73px;top:24.01px;line-height:0;white-space:pre;font-family:'Liberation Mono', monospace;font-size:10.83px"></div><div style="position:absolute;right:546px;top:40.31px;line-height:0;white-space:pre;font-family:'Liberation Mono', monospace;font-size:10.83px;color:#858585;text-align:right;width:60px;left:-11px">3</div><div style="position:absolute;left:73px;top:40.31px;line-height:0;white-space:pre;font-family:'Liberation Mono', monospace;font-size:10.83px"><span style="color:#56a84e">/**</span></div><div style="position:absolute;right:546px;top:56.61px;line-height:0;white-space:pre;font-family:'Liberation Mono', monospace;font-size:10.83px;color:#858585;text-align:right;width:60px;left:-11px">4</div><div style="position:absolute;left:73px;top:56.61px;line-height:0;white-space:pre;font-family:'Liberation Mono', monospace;font-size:10.83px"><span style="color:#56a84e"> * </span><span style="color:#5a8fe0">@type</span><span style="color:#56a84e"> </span><span style="color:#4ec9b0">{import(&quot;webpack/types&quot;).Configuration}</span></div><div style="position:absolute;right:546px;top:72.91px;line-height:0;white-space:pre;font-family:'Liberation Mono', monospace;font-size:10.83px;color:#858585;text-align:right;width:60px;left:-11px">5</div><div style="position:absolute;left:73px;top:72.91px;line-height:0;white-space:pre;font-family:'Liberation Mono', monospace;font-size:10.83px"><span style="color:#56a84e"> */</span></div><div style="position:absolute;right:546px;top:89.21px;line-height:0;white-space:pre;font-family:'Liberation Mono', monospace;font-size:10.83px;color:#858585;text-align:right;width:60px;left:-11px">6</div><div style="position:absolute;left:73px;top:89.21px;line-height:0;white-space:pre;font-family:'Liberation Mono', monospace;font-size:10.83px"><span style="color:#5a8fe0">const</span><span style="color:#d4d4d4"> </span><span style="color:#4fc1ff">config</span><span style="color:#d4d4d4"> = {</span></div><div style="position:absolute;right:546px;top:105.51px;line-height:0;white-space:pre;font-family:'Liberation Mono', monospace;font-size:10.83px;color:#858585;text-align:right;width:60px;left:-11px">7</div><div style="position:absolute;left:73px;top:105.51px;line-height:0;white-space:pre;font-family:'Liberation Mono', monospace;font-size:10.83px"><span style="color:#d4d4d4">  </span><span style="color:#c8d8ec">mode</span><span style="color:#d4d4d4">: </span><span style="color:#ce9178">&#x27;production&#x27;</span><span style="color:#d4d4d4">,</span></div><div style="position:absolute;right:546px;top:121.81px;line-height:0;white-space:pre;font-family:'Liberation Mono', monospace;font-size:10.83px;color:#858585;text-align:right;width:60px;left:-11px">8</div><div style="position:absolute;left:73px;top:121.81px;line-height:0;white-space:pre;font-family:'Liberation Mono', monospace;font-size:10.83px"><span style="color:#d4d4d4">  </span><span style="color:#c8d8ec">entry</span><span style="color:#d4d4d4">: {</span></div><div style="position:absolute;right:546px;top:138.11px;line-height:0;white-space:pre;font-family:'Liberation Mono', monospace;font-size:10.83px;color:#858585;text-align:right;width:60px;left:-11px">9</div><div style="position:absolute;left:73px;top:138.11px;line-height:0;white-space:pre;font-family:'Liberation Mono', monospace;font-size:10.83px"><span style="color:#d4d4d4">    </span><span style="color:#c8d8ec">main</span><span style="color:#d4d4d4">: </span><span style="color:#ce9178">&#x27;./src&#x27;</span><span style="color:#d4d4d4">,</span></div><div style="position:absolute;right:546px;top:154.41px;line-height:0;white-space:pre;font-family:'Liberation Mono', monospace;font-size:10.83px;color:#858585;text-align:right;width:60px;left:-11px">10</div><div style="position:absolute;left:73px;top:154.41px;line-height:0;white-space:pre;font-family:'Liberation Mono', monospace;font-size:10.83px"><span style="color:#d4d4d4">  },</span></div><div style="position:absolute;right:546px;top:170.71px;line-height:0;white-space:pre;font-family:'Liberation Mono', monospace;font-size:10.83px;color:#858585;text-align:right;width:60px;left:-11px">11</div><div style="position:absolute;left:73px;top:170.71px;line-height:0;white-space:pre;font-family:'Liberation Mono', monospace;font-size:10.83px"><span style="color:#d4d4d4">  </span><span style="color:#c8d8ec">output</span><span style="color:#d4d4d4">: {</span></div><div style="position:absolute;right:546px;top:187.01px;line-height:0;white-space:pre;font-family:'Liberation Mono', monospace;font-size:10.83px;color:#858585;text-align:right;width:60px;left:-11px">12</div><div style="position:absolute;left:73px;top:187.01px;line-height:0;white-space:pre;font-family:'Liberation Mono', monospace;font-size:10.83px"><span style="color:#d4d4d4">    </span><span style="color:#c8d8ec">path</span><span style="color:#d4d4d4">: </span><span style="color:#c8d8ec">path</span><span style="color:#d4d4d4">.</span><span style="color:#dcdcaa">join</span><span style="color:#d4d4d4">(</span><span style="color:#9cdcfe">__dirname</span><span style="color:#d4d4d4">, </span><span style="color:#ce9178">&#x27;dist&#x27;</span><span style="color:#d4d4d4">),</span></div><div style="position:absolute;right:546px;top:203.31px;line-height:0;white-space:pre;font-family:'Liberation Mono', monospace;font-size:10.83px;color:#858585;text-align:right;width:60px;left:-11px">13</div><div style="position:absolute;left:73px;top:203.31px;line-height:0;white-space:pre;font-family:'Liberation Mono', monospace;font-size:10.83px"><span style="color:#d4d4d4">    </span><span style="color:#c8d8ec">filename</span><span style="color:#d4d4d4">: </span><span style="color:#ce9178">&#x27;[name].js&#x27;</span><span style="color:#d4d4d4">,</span></div><div style="position:absolute;right:546px;top:219.61px;line-height:0;white-space:pre;font-family:'Liberation Mono', monospace;font-size:10.83px;color:#858585;text-align:right;width:60px;left:-11px">14</div><div style="position:absolute;left:73px;top:219.61px;line-height:0;white-space:pre;font-family:'Liberation Mono', monospace;font-size:10.83px"><span style="color:#d4d4d4">    </span><span style="color:#c8d8ec">clean</span><span style="color:#d4d4d4">: </span><span style="color:#5a8fe0">true</span><span style="color:#d4d4d4">,</span></div><div style="position:absolute;right:546px;top:235.91px;line-height:0;white-space:pre;font-family:'Liberation Mono', monospace;font-size:10.83px;color:#858585;text-align:right;width:60px;left:-11px">15</div><div style="position:absolute;left:73px;top:235.91px;line-height:0;white-space:pre;font-family:'Liberation Mono', monospace;font-size:10.83px"><span style="color:#d4d4d4">  },</span></div><div style="position:absolute;right:546px;top:252.21px;line-height:0;white-space:pre;font-family:'Liberation Mono', monospace;font-size:10.83px;color:#858585;text-align:right;width:60px;left:-11px">16</div><div style="position:absolute;left:73px;top:252.21px;line-height:0;white-space:pre;font-family:'Liberation Mono', monospace;font-size:10.83px"><span style="color:#d4d4d4">  </span><span style="color:#c8d8ec">optimization</span><span style="color:#d4d4d4">: {</span></div><div style="position:absolute;right:546px;top:268.51px;line-height:0;white-space:pre;font-family:'Liberation Mono', monospace;font-size:10.83px;color:#858585;text-align:right;width:60px;left:-11px">17</div><div style="position:absolute;left:73px;top:268.51px;line-height:0;white-space:pre;font-family:'Liberation Mono', monospace;font-size:10.83px"><span style="color:#d4d4d4">    </span><span style="color:#56a84e">// Instruct webpack not to obfuscate the resulting code</span></div><div style="position:absolute;right:546px;top:284.81px;line-height:0;white-space:pre;font-family:'Liberation Mono', monospace;font-size:10.83px;color:#858585;text-align:right;width:60px;left:-11px">18</div><div style="position:absolute;left:73px;top:284.81px;line-height:0;white-space:pre;font-family:'Liberation Mono', monospace;font-size:10.83px"><span style="color:#d4d4d4">    </span><span style="color:#c8d8ec">minimize</span><span style="color:#d4d4d4">: </span><span style="color:#5a8fe0">false</span><span style="color:#d4d4d4">,</span></div><div style="position:absolute;right:546px;top:301.11px;line-height:0;white-space:pre;font-family:'Liberation Mono', monospace;font-size:10.83px;color:#858585;text-align:right;width:60px;left:-11px">19</div><div style="position:absolute;left:73px;top:301.11px;line-height:0;white-space:pre;font-family:'Liberation Mono', monospace;font-size:10.83px"><span style="color:#d4d4d4">    </span><span style="color:#56a84e">// splitChunks: false,</span></div><div style="position:absolute;right:546px;top:317.41px;line-height:0;white-space:pre;font-family:'Liberation Mono', monospace;font-size:10.83px;color:#858585;text-align:right;width:60px;left:-11px">20</div><div style="position:absolute;left:73px;top:317.41px;line-height:0;white-space:pre;font-family:'Liberation Mono', monospace;font-size:10.83px"><span style="color:#d4d4d4">    </span><span style="color:#c8d8ec">splitChunks</span><span style="color:#d4d4d4">: {</span></div><div style="position:absolute;right:546px;top:333.71px;line-height:0;white-space:pre;font-family:'Liberation Mono', monospace;font-size:10.83px;color:#858585;text-align:right;width:60px;left:-11px">21</div><div style="position:absolute;left:73px;top:333.71px;line-height:0;white-space:pre;font-family:'Liberation Mono', monospace;font-size:10.83px"><span style="color:#d4d4d4">      </span><span style="color:#c8d8ec">minSize</span><span style="color:#d4d4d4">: </span><span style="color:#b5cea8">0</span><span style="color:#d4d4d4">,</span></div><div style="position:absolute;right:546px;top:350.01px;line-height:0;white-space:pre;font-family:'Liberation Mono', monospace;font-size:10.83px;color:#858585;text-align:right;width:60px;left:-11px">22</div><div style="position:absolute;left:73px;top:350.01px;line-height:0;white-space:pre;font-family:'Liberation Mono', monospace;font-size:10.83px"><span style="color:#d4d4d4">    },</span></div><div style="position:absolute;right:546px;top:366.31px;line-height:0;white-space:pre;font-family:'Liberation Mono', monospace;font-size:10.83px;color:#858585;text-align:right;width:60px;left:-11px">23</div><div style="position:absolute;left:73px;top:366.31px;line-height:0;white-space:pre;font-family:'Liberation Mono', monospace;font-size:10.83px"><span style="color:#d4d4d4">  },</span></div><div style="position:absolute;right:546px;top:382.61px;line-height:0;white-space:pre;font-family:'Liberation Mono', monospace;font-size:10.83px;color:#858585;text-align:right;width:60px;left:-11px">24</div><div style="position:absolute;left:73px;top:382.61px;line-height:0;white-space:pre;font-family:'Liberation Mono', monospace;font-size:10.83px"><span style="color:#d4d4d4">  </span><span style="color:#c8d8ec">context</span><span style="color:#d4d4d4">: </span><span style="color:#9cdcfe">__dirname</span><span style="color:#d4d4d4">,</span></div><div style="position:absolute;right:546px;top:398.91px;line-height:0;white-space:pre;font-family:'Liberation Mono', monospace;font-size:10.83px;color:#858585;text-align:right;width:60px;left:-11px">25</div><div style="position:absolute;left:73px;top:398.91px;line-height:0;white-space:pre;font-family:'Liberation Mono', monospace;font-size:10.83px"><span style="color:#d4d4d4">};</span></div><div style="position:absolute;right:546px;top:415.21px;line-height:0;white-space:pre;font-family:'Liberation Mono', monospace;font-size:10.83px;color:#858585;text-align:right;width:60px;left:-11px">26</div><div style="position:absolute;left:73px;top:415.21px;line-height:0;white-space:pre;font-family:'Liberation Mono', monospace;font-size:10.83px"></div></div><div style="position:absolute;left:369px;top:69px;width:1px;height:16px;background:#c8c8c8;"></div><div style="position:absolute;left:453.5px;top:82.5px;width:1.5px;height:1.5px;background:#8a8a8a;"></div><div style="position:absolute;left:457px;top:82.5px;width:1.5px;height:1.5px;background:#8a8a8a;"></div><div style="position:absolute;left:460.5px;top:82.5px;width:1.5px;height:1.5px;background:#8a8a8a;"></div><div style="position:absolute;left:296px;top:487px;width:607px;height:187px;background:#15171e;"></div><div style="position:absolute;left:308px;top:499.84px;line-height:0;white-space:pre;font-family:'Liberation Sans', sans-serif;font-size:12px;font-weight:400;color:#a0a0a0;letter-spacing:0px;">Terminal</div><svg style="position:absolute;left:882px;top:491px;" width="16" height="16" viewBox="0 0 16 16"><path d="M7.6 2 V14" stroke="#9a9a9a" stroke-width="1.1"/><path d="M2 8 H13.3" stroke="#8a8a8a" stroke-width="1.5"/></svg><div style="position:absolute;left:307px;top:519.94px;line-height:0;white-space:pre;font-family:'Liberation Mono', monospace;font-size:10.0px"><span style="color:#ececec;font-weight:700">    ./src/d.js</span><span style="color:#ececec;font-weight:400"> 20 bytes </span><span style="color:#eef27a;font-weight:700">[built] [code generated]</span></div><div style="position:absolute;left:307px;top:532.94px;line-height:0;white-space:pre;font-family:'Liberation Mono', monospace;font-size:10.0px"><span style="color:#ececec;font-weight:700">    ./src/f.js</span><span style="color:#ececec;font-weight:400"> 20 bytes </span><span style="color:#eef27a;font-weight:700">[built] [code generated]</span></div><div style="position:absolute;left:307px;top:545.94px;line-height:0;white-space:pre;font-family:'Liberation Mono', monospace;font-size:10.0px"><span style="color:#ececec;font-weight:700">    ./src/g.js</span><span style="color:#ececec;font-weight:400"> 45 bytes </span><span style="color:#eef27a;font-weight:700">[built] [code generated]</span></div><div style="position:absolute;left:307px;top:558.94px;line-height:0;white-space:pre;font-family:'Liberation Mono', monospace;font-size:10.0px"><span style="color:#ececec;font-weight:400">  modules by path </span><span style="color:#ececec;font-weight:700">./src/node_modules/*.js</span><span style="color:#ececec;font-weight:400"> 83 bytes</span></div><div style="position:absolute;left:307px;top:571.94px;line-height:0;white-space:pre;font-family:'Liberation Mono', monospace;font-size:10.0px"><span style="color:#ececec;font-weight:700">    ./src/node_modules/x.js</span><span style="color:#ececec;font-weight:400"> 43 bytes </span><span style="color:#eef27a;font-weight:700">[built] [code generated]</span></div><div style="position:absolute;left:307px;top:584.94px;line-height:0;white-space:pre;font-family:'Liberation Mono', monospace;font-size:10.0px"><span style="color:#ececec;font-weight:700">    ./src/node_modules/y.js</span><span style="color:#ececec;font-weight:400"> 20 bytes </span><span style="color:#eef27a;font-weight:700">[built] [code generated]</span></div><div style="position:absolute;left:307px;top:597.94px;line-height:0;white-space:pre;font-family:'Liberation Mono', monospace;font-size:10.0px"><span style="color:#ececec;font-weight:700">    ./src/node_modules/z.js</span><span style="color:#ececec;font-weight:400"> 20 bytes </span><span style="color:#eef27a;font-weight:700">[built] [code generated]</span></div><div style="position:absolute;left:307px;top:610.94px;line-height:0;white-space:pre;font-family:'Liberation Mono', monospace;font-size:10.0px"><span style="color:#ececec;font-weight:700">  ./src/a.js + 1 modules</span><span style="color:#ececec;font-weight:400"> 185 bytes </span><span style="color:#eef27a;font-weight:700">[built] [code generated]</span></div><div style="position:absolute;left:307px;top:623.94px;line-height:0;white-space:pre;font-family:'Liberation Mono', monospace;font-size:10.0px"><span style="color:#ececec;font-weight:400">webpack 5.64.4 compiled </span><span style="color:#2ee86a;font-weight:700">successfully</span><span style="color:#ececec;font-weight:400"> in 193 ms</span></div><div style="position:absolute;left:307px;top:636.94px;line-height:0;white-space:pre;font-family:'Liberation Mono', monospace;font-size:10.0px"></div><div style="position:absolute;left:307px;top:649.94px;line-height:0;white-space:pre;font-family:'Liberation Mono', monospace;font-size:10.0px"><span style="color:#3aa7f0;font-weight:400">~/projects/node-tlym1w</span></div><div style="position:absolute;left:307px;top:662.94px;line-height:0;white-space:pre;font-family:'Liberation Mono', monospace;font-size:10.0px"><span style="color:#ff2ea0;font-weight:700">❯</span></div><div style="position:absolute;left:319px;top:655.5px;width:6.2px;height:12.3px;background:transparent;border:1px solid #bdbdbd;border-bottom:none;box-sizing:border-box;"></div><div style="position:absolute;left:892px;top:638px;width:11px;height:30px;background:#3a3b40;"></div>
</body></html>
